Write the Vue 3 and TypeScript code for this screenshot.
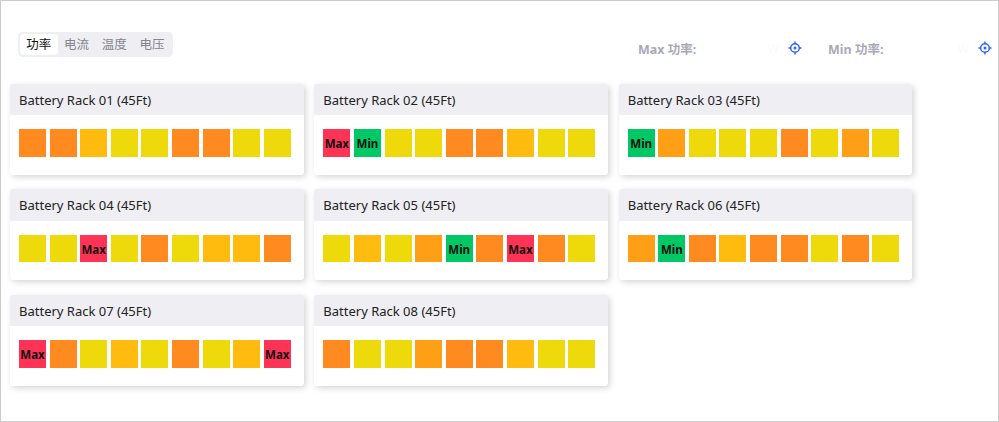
<script setup lang="ts">
const tabs = ['功率', '电流', '温度', '电压']
type Cell = 'o' | 'a' | 'y' | 'd' | 'x' | 'n'
const rows: string[] = [
  'ooayyooyy',
  'xnyyooayy',
  'ndyyyoydy',
  'yyxyoyaao',
  'yaydnoxoy',
  'dnoaooyoy',
  'xoyayoyax',
  'oyydooayy',
]
const racks = rows.map((r, i) => ({
  name: `Battery Rack 0${i + 1} (45Ft)`,
  cells: r.split('') as Cell[],
}))
const label = (c: Cell) => (c === 'x' ? 'Max' : c === 'n' ? 'Min' : '')
const stats = ['Max 功率:', 'Min 功率:']
</script>

<template>
  <div class="page">
    <div class="toolbar">
      <div class="tabs">
        <span v-for="(t, i) in tabs" :key="t" class="tab" :class="{ active: i === 0 }">{{ t }}</span>
      </div>
      <div class="stats">
        <div v-for="s in stats" :key="s" class="stat">
          <span class="stat-label">{{ s }}</span>
          <span class="stat-unit">W</span>
          <svg class="locate" width="14" height="14" viewBox="0 0 14 14" fill="none" stroke="#2b63f5">
            <circle cx="7" cy="7" r="4.3" stroke-width="1.4" />
            <circle cx="7" cy="7" r="1.5" fill="#2b63f5" stroke="none" />
            <path d="M7 0.5V3M7 11V13.5M0.5 7H3M11 7H13.5" stroke-width="1.4" />
          </svg>
        </div>
      </div>
    </div>
    <div class="grid">
      <div v-for="r in racks" :key="r.name" class="card">
        <div class="card-head">{{ r.name }}</div>
        <div class="cells">
          <div v-for="(c, i) in r.cells" :key="i" class="cell" :class="'c-' + c">{{ label(c) }}</div>
        </div>
      </div>
    </div>
  </div>
</template>

<style>
html, body { margin: 0; background: #fff; }
</style>

<style scoped>
.page {
  box-sizing: border-box;
  width: 999px;
  height: 422px;
  border: 1px solid #ccc;
  padding: 31px 0 0 9px;
  font-family: "Noto Sans", "Noto Sans CJK SC", sans-serif;
  overflow: hidden;
}
.toolbar {
  display: flex;
  justify-content: space-between;
  align-items: flex-start;
  height: 51.9px;
}
.tabs {
  display: flex;
  margin-left: 8px;
  padding: 2px;
  height: 25px;
  box-sizing: border-box;
  background: #eeeef3;
  border-radius: 5px;
}
.tab {
  width: 37.75px;
  text-align: center;
  font-size: 12.5px;
  line-height: 21px;
  color: #85858f;
  border-radius: 4px;
}
.tab.active { background: #fff; color: #111; }
.stats {
  display: flex;
  gap: 26px;
  margin-top: 7px;
  margin-right: 6px;
}
.stat {
  display: flex;
  align-items: center;
  width: 164px;
  height: 18px;
}
.stat-label {
  font-size: 12.5px;
  font-weight: 700;
  color: #a9a9b6;
}
.stat-unit {
  margin-left: auto;
  margin-right: 9px;
  font-size: 12px;
  color: #fafafa;
}
.locate { flex: none; }
.grid {
  display: grid;
  grid-template-columns: repeat(3, 293.5px);
  column-gap: 10.85px;
  row-gap: 14.4px;
  align-content: start;
}
.card {
  height: 91px;
  background: #fff;
  border-radius: 3px;
  box-shadow: 2px 2px 6px rgba(0, 0, 0, 0.17);
  overflow: hidden;
}
.card-head {
  height: 31.6px;
  padding-left: 9px;
  background: #eeeef3;
  color: #222;
  font-size: 13px;
  line-height: 33px;
}
.cells {
  display: flex;
  gap: 3.6px;
  padding: 13.8px 0 0 9px;
}
.cell {
  width: 27px;
  height: 27.8px;
  flex: none;
  font-size: 11.5px;
  font-weight: 700;
  line-height: 29px;
  text-align: center;
  white-space: nowrap;
  color: #111;
}
.c-o { background: #ff8a20; }
.c-a { background: #ffbb0e; }
.c-y { background: #eed90a; }
.c-d { background: #ff9f16; }
.c-x { background: #ff3355; }
.c-n { background: #00c864; }
</style>
